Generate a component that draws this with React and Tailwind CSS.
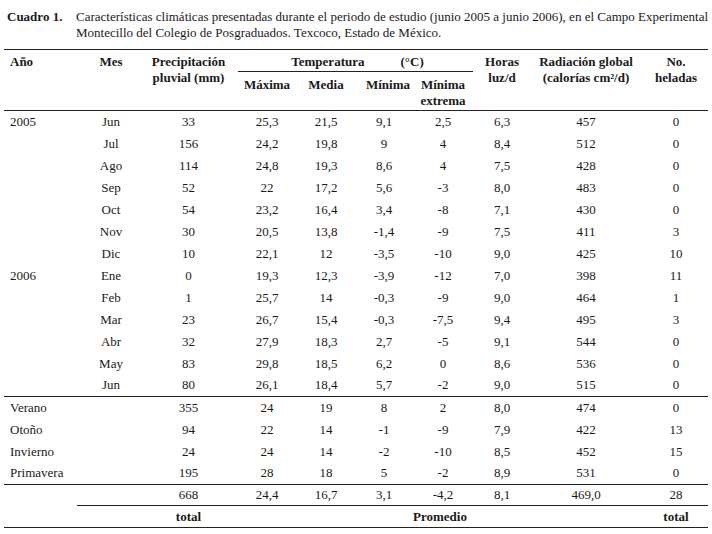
import React from "react";

const months = [
  ["2005", "Jun", "33", "25,3", "21,5", "9,1", "2,5", "6,3", "457", "0"],
  ["", "Jul", "156", "24,2", "19,8", "9", "4", "8,4", "512", "0"],
  ["", "Ago", "114", "24,8", "19,3", "8,6", "4", "7,5", "428", "0"],
  ["", "Sep", "52", "22", "17,2", "5,6", "-3", "8,0", "483", "0"],
  ["", "Oct", "54", "23,2", "16,4", "3,4", "-8", "7,1", "430", "0"],
  ["", "Nov", "30", "20,5", "13,8", "-1,4", "-9", "7,5", "411", "3"],
  ["", "Dic", "10", "22,1", "12", "-3,5", "-10", "9,0", "425", "10"],
  ["2006", "Ene", "0", "19,3", "12,3", "-3,9", "-12", "7,0", "398", "11"],
  ["", "Feb", "1", "25,7", "14", "-0,3", "-9", "9,0", "464", "1"],
  ["", "Mar", "23", "26,7", "15,4", "-0,3", "-7,5", "9,4", "495", "3"],
  ["", "Abr", "32", "27,9", "18,3", "2,7", "-5", "9,1", "544", "0"],
  ["", "May", "83", "29,8", "18,5", "6,2", "0", "8,6", "536", "0"],
  ["", "Jun", "80", "26,1", "18,4", "5,7", "-2", "9,0", "515", "0"],
];

const seasons = [
  ["Verano", "", "355", "24", "19", "8", "2", "8,0", "474", "0"],
  ["Otoño", "", "94", "22", "14", "-1", "-9", "7,9", "422", "13"],
  ["Invierno", "", "24", "24", "14", "-2", "-10", "8,5", "452", "15"],
  ["Primavera", "", "195", "28", "18", "5", "-2", "8,9", "531", "0"],
];

const DataRow = ({ row, last }) => (
  <tr className={"h-[22px] " + (last ? "border-b border-[#222]" : "")}>
    <td className="pl-[6px] text-left">{row[0]}</td>
    {row.slice(1, 9).map((v, i) => (
      <td key={i} className="text-center">
        {v}
      </td>
    ))}
    <td className="pl-2 text-center">{row[9]}</td>
  </tr>
);

export default function App() {
  return (
    <div className="w-[712px] h-[534px] bg-white text-[#1a1a1a] font-['Liberation_Serif',serif] overflow-hidden">
      {/* title */}
      <div className="flex pl-[7px] pt-[9px] text-[13px] leading-[16px]">
        <div className="w-[69px] shrink-0 font-bold">Cuadro 1.</div>
        <div className="whitespace-nowrap">
          Características climáticas presentadas durante el periodo de estudio (junio 2005 a junio 2006), en el Campo Experimental
          <br />
          Montecillo del Colegio de Posgraduados. Texcoco, Estado de México.
        </div>
      </div>

      <table className="mt-[8px] ml-[4px] w-[704px] table-fixed border-collapse text-[13px] leading-[16px]">
        <colgroup>
          <col className="w-[73px]" />
          <col className="w-[68px]" />
          <col className="w-[87px]" />
          <col className="w-[70px]" />
          <col className="w-[48px]" />
          <col className="w-[68px]" />
          <col className="w-[50px]" />
          <col className="w-[68px]" />
          <col className="w-[100px]" />
          <col className="w-[72px]" />
        </colgroup>
        <thead className="font-bold">
          <tr className="border-t border-[#222]">
            <th rowSpan={2} className="pl-[6px] pt-[4px] text-left align-top">Año</th>
            <th rowSpan={2} className="pt-[4px] text-center align-top">Mes</th>
            <th rowSpan={2} className="pt-[4px] text-center align-top">
              Precipitación
              <br />
              pluvial (mm)
            </th>
            <th colSpan={4} className="pt-[4px] p-0 align-top">
              <div className="ml-[6px] -mr-[5px] pb-[1px] border-b border-[#222] flex justify-center gap-[36px] pl-[4px]">
                <span>Temperatura</span>
                <span>(°C)</span>
              </div>
            </th>
            <th rowSpan={2} className="pt-[4px] text-center align-top">
              Horas
              <br />
              luz/d
            </th>
            <th rowSpan={2} className="pt-[4px] text-center align-top">
              Radiación global
              <br />
              (calorías cm²/d)
            </th>
            <th rowSpan={2} className="pt-[4px] pl-2 text-center align-top">
              No.
              <br />
              heladas
            </th>
          </tr>
          <tr className="border-b border-[#222]">
            <th className="pt-[5px] text-center align-top">Máxima</th>
            <th className="pt-[5px] text-center align-top">Media</th>
            <th className="pt-[5px] pl-[8px] text-center align-top">Mínima</th>
            <th className="pt-[5px] pb-[1px] text-center align-top">
              Mínima
              <br />
              extrema
            </th>
          </tr>
        </thead>
        <tbody>
          {months.map((r, i) => (
            <DataRow key={"m" + i} row={r} last={i === months.length - 1} />
          ))}
          {seasons.map((r, i) => (
            <DataRow key={"s" + i} row={r} last={i === seasons.length - 1} />
          ))}
          <tr className="h-[21px]">
            <td></td>
            <td className="border-b border-[#222]"></td>
            <td className="text-center border-b border-[#222]">668</td>
            <td className="text-center border-b border-[#222]">24,4</td>
            <td className="text-center border-b border-[#222]">16,7</td>
            <td className="text-center border-b border-[#222]">3,1</td>
            <td className="text-center border-b border-[#222]">-4,2</td>
            <td className="text-center border-b border-[#222]">8,1</td>
            <td className="text-center border-b border-[#222]">469,0</td>
            <td className="pl-2 text-center border-b border-[#222]">28</td>
          </tr>
          <tr className="h-[22px] border-b border-[#222] font-bold">
            <td></td>
            <td></td>
            <td className="text-center">total</td>
            <td></td>
            <td></td>
            <td></td>
            <td>
              <div className="flex justify-center whitespace-nowrap pr-[6px]">Promedio</div>
            </td>
            <td></td>
            <td></td>
            <td className="pl-2 text-center">total</td>
          </tr>
        </tbody>
      </table>
    </div>
  );
}
